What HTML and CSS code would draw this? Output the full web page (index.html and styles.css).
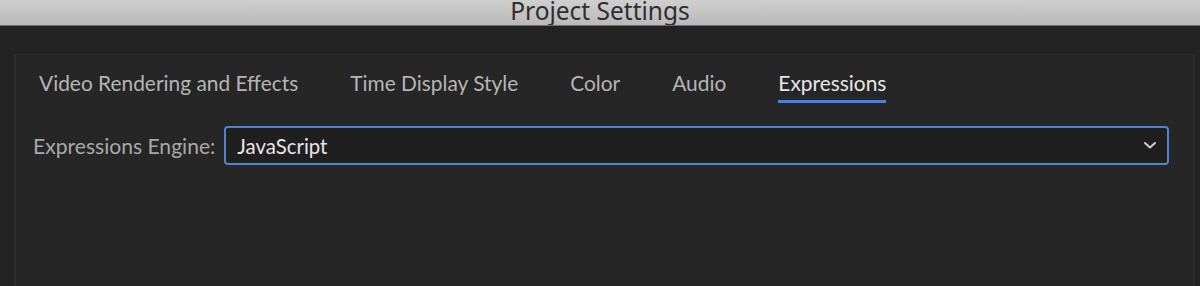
FILE: index.html
```html
<!DOCTYPE html>
<html lang="en">

<head>
    <meta charset="UTF-8">
    <meta name="viewport" content="width=device-width, initial-scale=1.0">
    <title>Project Settings</title>
    <link rel="stylesheet" href="styles.css">
</head>

<body>
    <div class="titlebar">
        <span class="title">Project Settings</span>
    </div>

    <div class="window">
        <div class="panel">
            <div class="tabs">
                <div class="tab">Video Rendering and Effects</div>
                <div class="tab">Time Display Style</div>
                <div class="tab">Color</div>
                <div class="tab">Audio</div>
                <div class="tab active">Expressions</div>
            </div>

            <div class="field">
                <label for="engine">Expressions Engine:</label>
                <div class="select" id="engine">
                    <span>JavaScript</span>
                    <svg class="chevron" width="14" height="9" viewBox="0 0 14 9">
                        <path d="M2 2 L7 6.5 L12 2" fill="none" stroke="#d0d0d0" stroke-width="2" stroke-linecap="round" stroke-linejoin="round" />
                    </svg>
                </div>
            </div>
        </div>
    </div>
</body>

</html>
```

FILE: styles.css
```css
body {
    margin: 0;
    width: 1200px;
    height: 286px;
    overflow: hidden;
    background-color: #232323;
    font-family: Lato, "Open Sans", sans-serif;
}

.titlebar {
    height: 25px;
    background: linear-gradient(#cfcfcf, #b9b9b9);
    border-bottom: 1px solid #6c6c6c;
    display: flex;
    justify-content: center;
    align-items: flex-end;
    overflow: hidden;
}

.title {
    font-family: "Noto Sans", sans-serif;
    font-size: 24.5px;
    color: #2e2e2e;
    line-height: 24px;
    margin-bottom: 2px;
}

.window {
    padding: 28px 5px 0 14px;
}

.panel {
    background-color: #262626;
    border-top: 1px solid #2c2c2c;
    border-left: 2px solid #2e2e2e;
    border-right: 2px solid #2e2e2e;
    height: 240px;
}

.tabs {
    display: flex;
    gap: 52px;
    padding: 15px 0 0 23px;
}

.tab {
    font-size: 20.9px;
    color: #b5b5b5;
    height: 30px;
    line-height: 26px;
    border-bottom: 3px solid transparent;
}

.tab.active {
    color: #e6e6e6;
    border-bottom-color: #4b80d2;
}

.field {
    display: flex;
    align-items: center;
    gap: 9px;
    padding: 23px 24px 0 17px;
}

label {
    font-size: 21.1px;
    color: #a9a9a9;
}

.select {
    flex: 1;
    height: 35px;
    box-sizing: content-box;
    border: 2px solid #5482c8;
    border-radius: 4px;
    background-color: #1f1f1f;
    display: flex;
    align-items: center;
    justify-content: space-between;
    padding: 0 0 0 11px;
}

.select span {
    font-size: 20.4px;
    color: #e6e6e6;
}

.chevron {
    margin-right: 10px;
}
```
